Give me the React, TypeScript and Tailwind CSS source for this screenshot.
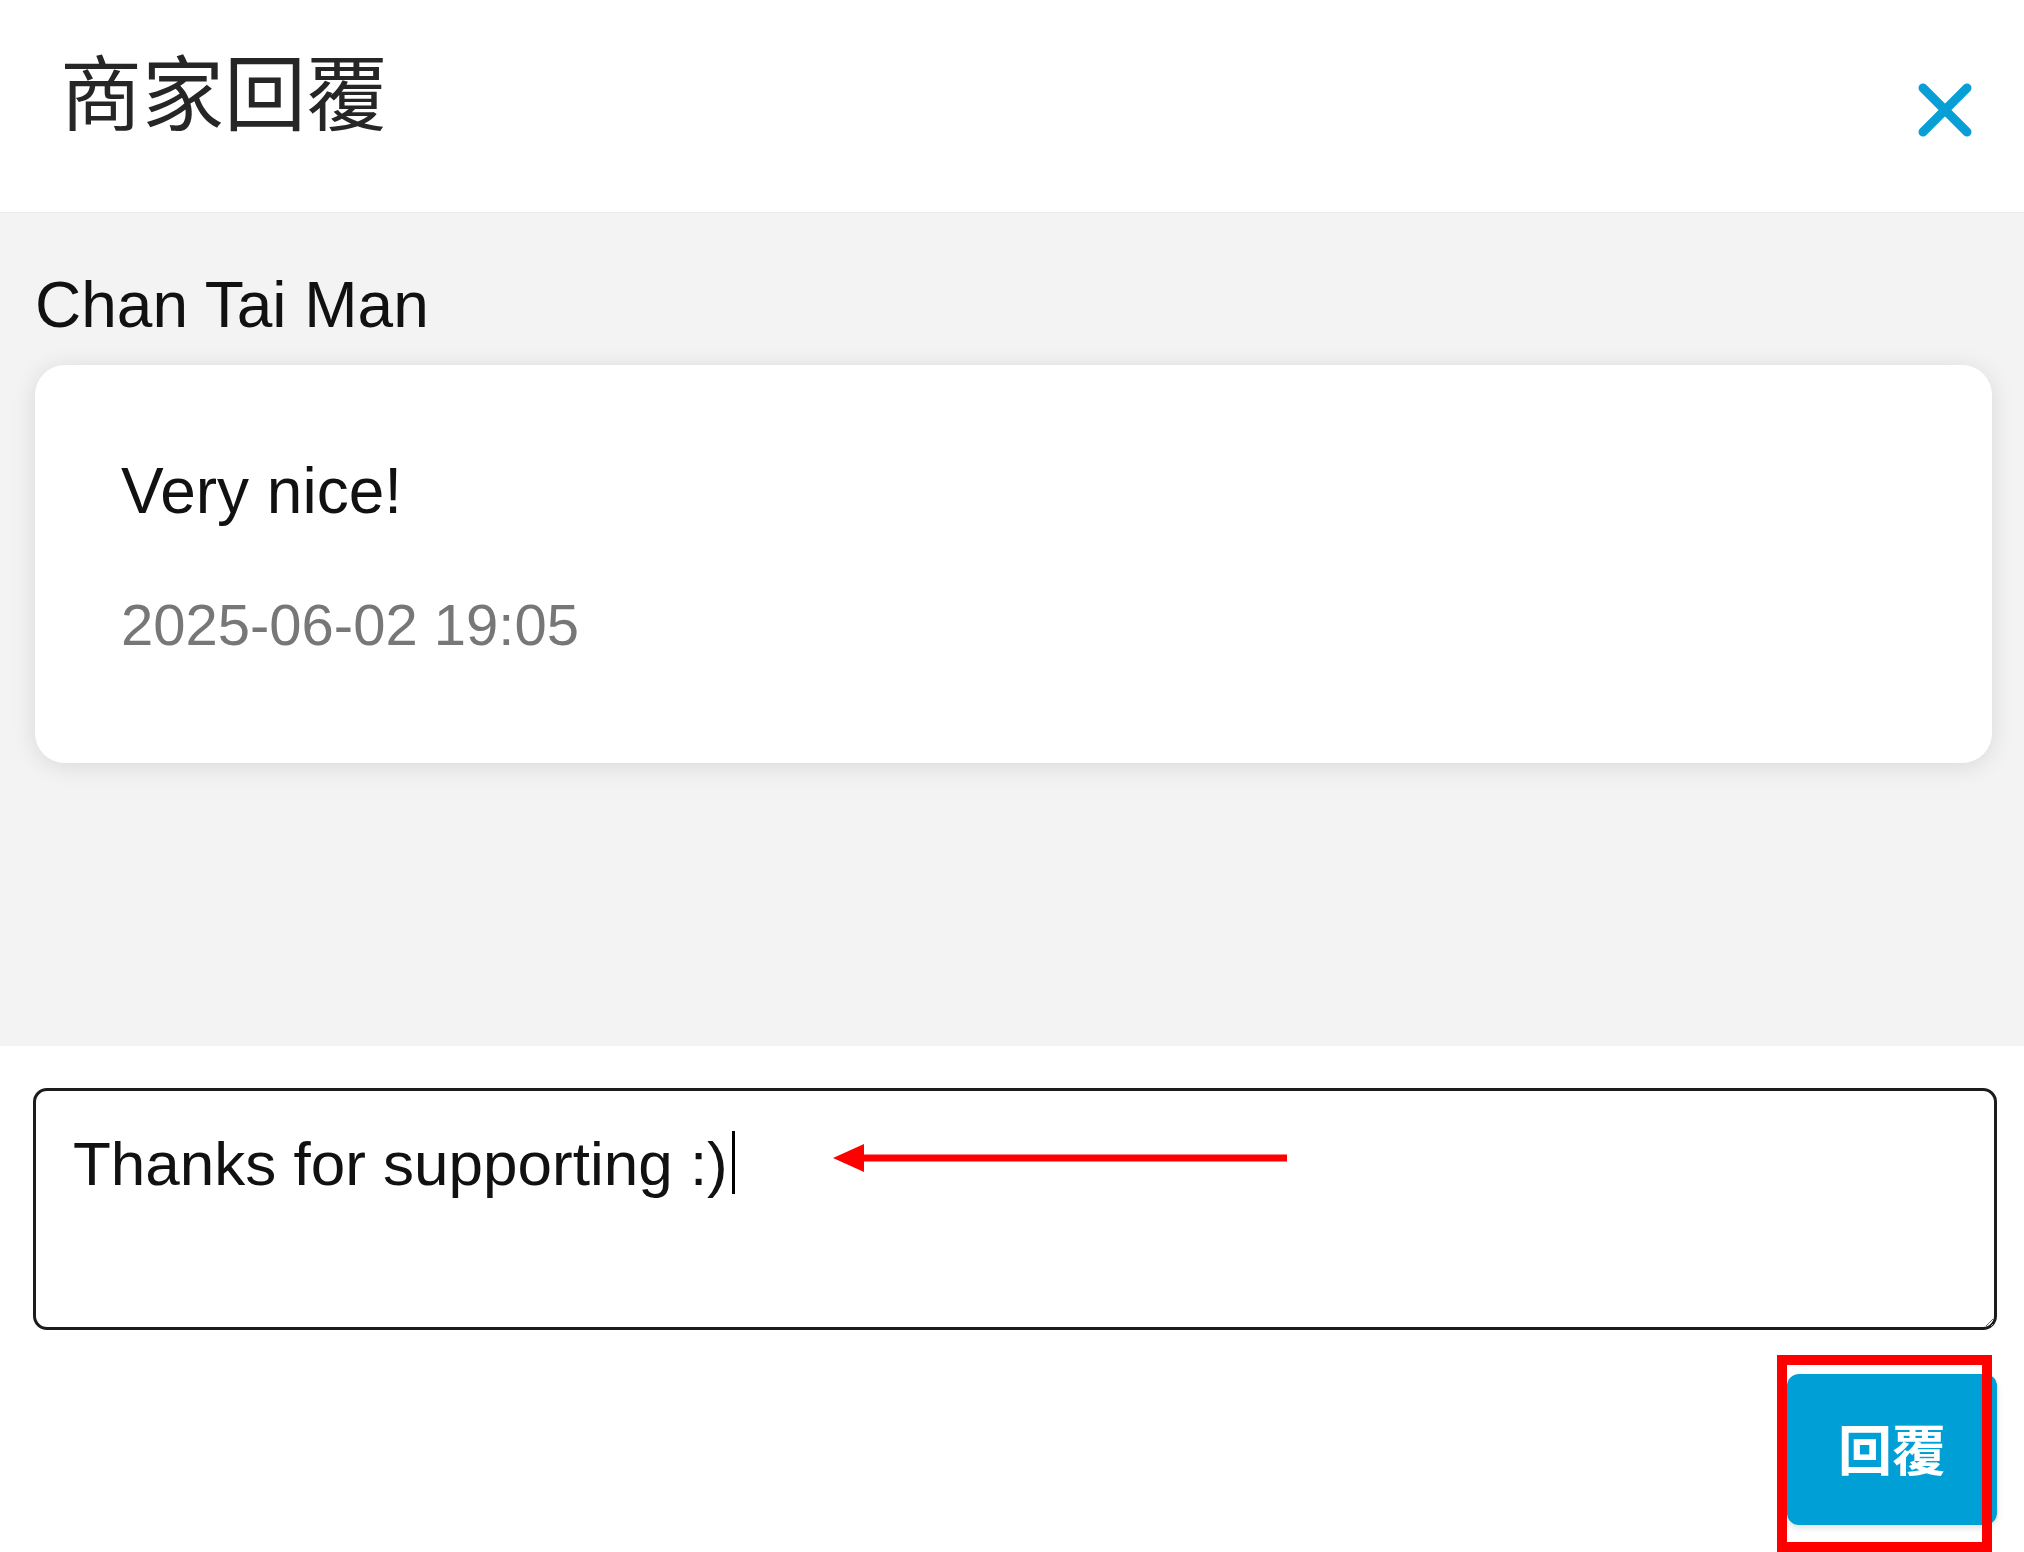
import React from "react";

export default function App() {
  return (
    <div className="relative w-[2024px] h-[1552px] overflow-hidden bg-white font-['Liberation_Sans','Noto_Sans_CJK_TC',sans-serif]">
      {/* Header */}
      <div className="h-[213px] flex items-start justify-between pl-[60px] pr-[52px] pt-[49px] bg-white border-b border-[#ececec]">
        <h1 className="text-[82px] leading-[80px] font-normal text-[#262626] font-['Noto_Sans_CJK_TC','Noto_Sans_CJK_SC',sans-serif]">
          商家回覆
        </h1>
        <button className="mt-[34px] w-[54px] h-[54px]" aria-label="close">
          <svg width="54" height="54" viewBox="0 0 54 54">
            <line x1="5" y1="5" x2="49" y2="49" stroke="#089fd6" strokeWidth="9" strokeLinecap="round" />
            <line x1="49" y1="5" x2="5" y2="49" stroke="#089fd6" strokeWidth="9" strokeLinecap="round" />
          </svg>
        </button>
      </div>

      {/* Conversation area */}
      <div className="h-[833px] bg-[#f3f3f3] pl-[35px] pr-[32px] pt-[56px]">
        <div className="text-[64px] leading-[72px] text-[#111]">Chan Tai Man</div>
        <div className="mt-[24px] bg-white rounded-[30px] shadow-[0_3px_24px_rgba(0,0,0,0.11)] pl-[86px] pt-[90px] pb-[106px]">
          <div className="text-[64px] leading-[72px] text-[#111]">Very nice!</div>
          <div className="mt-[66px] text-[58px] leading-[64px] text-[#777]">2025-06-02 19:05</div>
        </div>
      </div>

      {/* Reply area */}
      <div className="pl-[33px] pr-[27px] pt-[42px] flex flex-col items-end">
        <div className="relative w-full">
          <textarea
            className="block w-full h-[242px] resize border-[3px] border-[#1c1c1c] rounded-[14px] pl-[37px] pt-[37px] pr-[20px] text-[62px] leading-[72px] text-[#111] bg-white outline-none font-['Liberation_Sans',sans-serif]"
            defaultValue="Thanks for supporting :)"
          />
          <span className="absolute left-[699px] top-[43px] w-[3px] h-[63px] bg-black" />
        </div>
        <button className="mt-[44px] w-[210px] h-[151px] rounded-[12px] bg-[#009fd6] text-white text-[54px] leading-[60px] pb-[4px] font-bold shadow-[0_3px_6px_rgba(0,0,0,0.12)] font-['Noto_Sans_CJK_TC',sans-serif]">
          回覆
        </button>
      </div>

      {/* Annotations */}
      <svg className="absolute left-[828px] top-[1140px]" width="470" height="36" viewBox="0 0 470 36">
        <line x1="30" y1="18" x2="459" y2="18" stroke="#ff0000" strokeWidth="7" />
        <polygon points="5,18 36,4 36,32" fill="#ff0000" />
      </svg>
      <div className="absolute left-[1777px] top-[1355px] w-[215px] h-[197px] border-[10px] border-[#ff0000]" />
    </div>
  );
}
